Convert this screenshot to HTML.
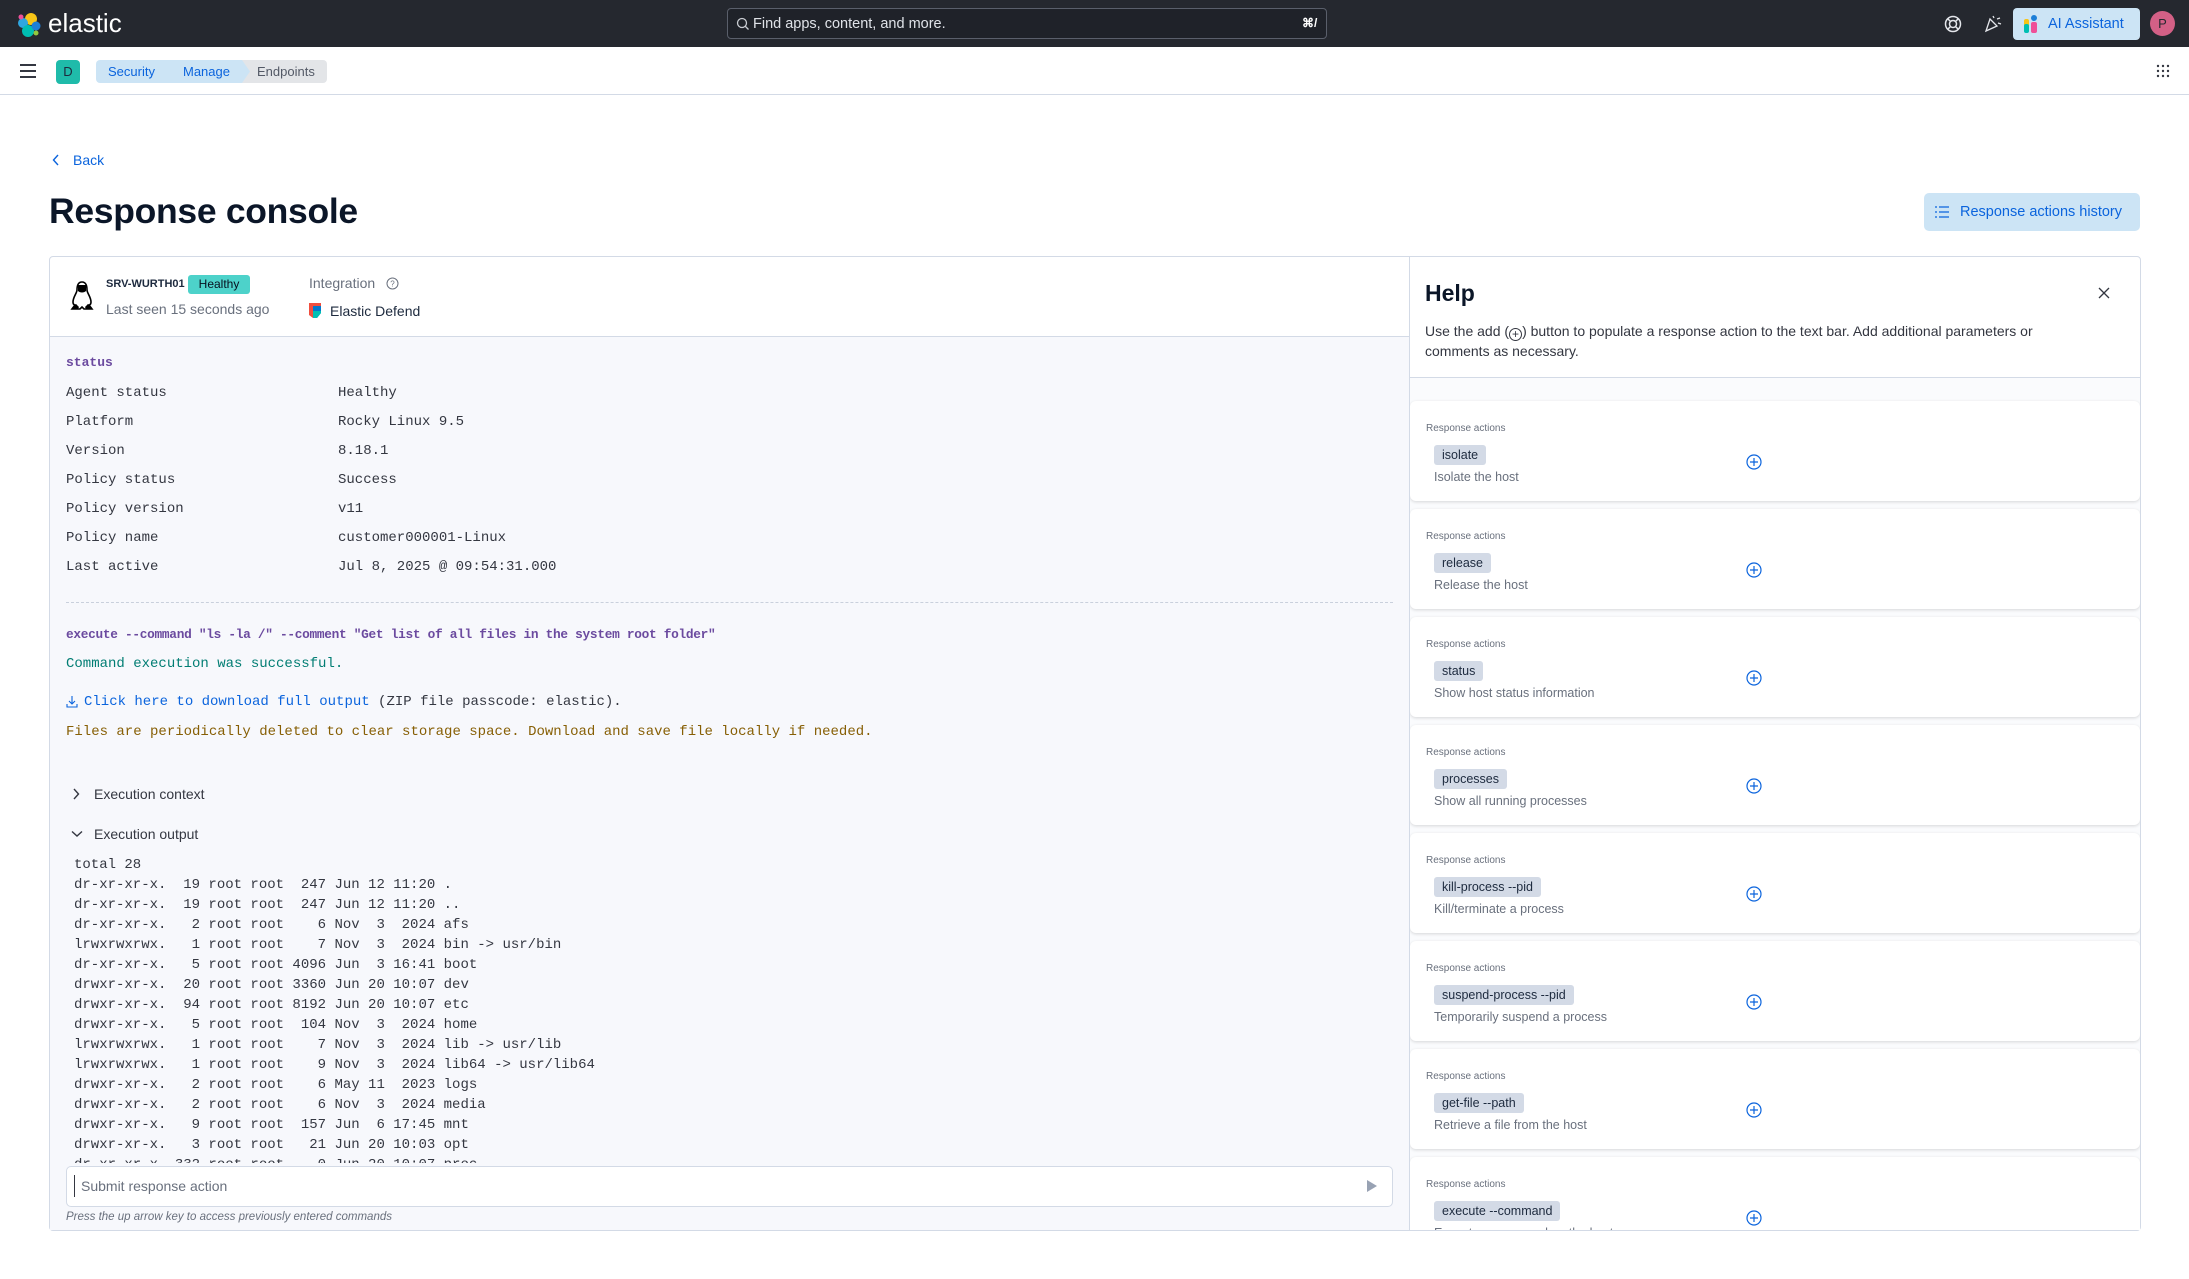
<!DOCTYPE html>
<html><head><meta charset="utf-8"><style>
*{box-sizing:border-box;margin:0;padding:0}
body{width:2189px;height:1279px;overflow:hidden;background:#fff;font-family:"Liberation Sans",sans-serif;color:#1d2a3e;position:relative}
.a{position:absolute;white-space:nowrap}
.mono{font-family:"Liberation Mono",monospace}
.top{position:absolute;left:0;top:0;width:2189px;height:47px;background:#25282f}
.bar2{position:absolute;left:0;top:47px;width:2189px;height:48px;background:#fff;border-bottom:1px solid #d3dae6}
.bc{position:absolute;top:60px;height:23px;font-size:13px;line-height:23px;padding-left:18px}
.item{position:absolute;left:1410px;width:730px;height:100px;background:#fff;border-radius:6px;box-shadow:0 1px 3px rgba(0,0,0,.15)}
.item .l{position:absolute;left:16px;top:22px;font-size:10px;color:#69707d}
.item .b{position:absolute;left:24px;top:44px;height:20px;line-height:20px;padding:0 8px;background:#d3dae6;border-radius:3px;font-size:12.5px;color:#1d2a3e}
.item .d{position:absolute;left:24px;top:69px;font-size:12.5px;color:#69707d}
.item svg{position:absolute;left:336px;top:53px}
.kv{position:absolute;font-size:14px;color:#343741}
.out{position:absolute;left:74px;top:855px;font-size:14px;line-height:20px;color:#343741;white-space:pre;height:308px;overflow:hidden}
</style></head><body>
<div class="top"></div>
<svg class="a" style="left:16px;top:12px" width="26" height="26" viewBox="0 0 26 26"><circle cx="15" cy="7" r="6" fill="#f8c517"/><circle cx="7" cy="11" r="5" fill="#2fa6e0"/><circle cx="12" cy="19" r="6" fill="#00bfb3"/><circle cx="20" cy="14" r="4.5" fill="#1d7fd8"/><circle cx="5" cy="5" r="2.5" fill="#ef5098"/><circle cx="20" cy="21" r="2.5" fill="#93c83e"/></svg>
<div class="a" style="left:48px;top:8px;font-size:26px;color:#fff">elastic</div>
<div class="a" style="left:727px;top:8px;width:600px;height:31px;border:1px solid #5a5f6b;border-radius:4px;background:#1f2229"></div>
<svg class="a" style="left:736px;top:17px" width="14" height="14" viewBox="0 0 14 14"><circle cx="6" cy="6" r="4.5" fill="none" stroke="#c9ccd2" stroke-width="1.3"/><path d="M9 9l3.5 3.5" stroke="#c9ccd2" stroke-width="1.3"/></svg>
<div class="a" style="left:753px;top:16px;font-size:14.5px;color:#dfe2e8">Find apps, content, and more.</div>
<div class="a" style="left:1302px;top:16px;font-size:12px;color:#fff;font-weight:bold">⌘/</div>
<svg class="a" style="left:1943px;top:14px" width="20" height="20" viewBox="0 0 20 20" fill="none" stroke="#e4e6eb" stroke-width="1.5"><circle cx="10" cy="10" r="7.5"/><circle cx="10" cy="10" r="3.5"/><path d="M5 5l2.5 2.5M15 5l-2.5 2.5M5 15l2.5-2.5M15 15l-2.5-2.5"/></svg>
<svg class="a" style="left:1983px;top:13px" width="20" height="20" viewBox="0 0 20 20" fill="none" stroke="#e4e6eb" stroke-width="1.3"><path d="M3 18l4-12 7 7z M10 3l1 2M14 6l3-1M15 10l3 1"/></svg>
<div class="a" style="left:2013px;top:8px;width:127px;height:32px;background:#cce4f5;border-radius:4px"></div>
<svg class="a" style="left:2024px;top:15px" width="14" height="18" viewBox="0 0 14 18"><rect x="0" y="4" width="5" height="8" rx="2" fill="#f8c517"/><rect x="0" y="9" width="5" height="9" rx="2" fill="#00bfb3"/><circle cx="10" cy="3" r="3" fill="#1d7fd8"/><rect x="7" y="7" width="6" height="11" rx="2" fill="#ef5098"/></svg>
<div class="a" style="left:2048px;top:16px;font-size:14.5px;color:#0b64dd">AI Assistant</div>
<div class="a" style="left:2150px;top:11px;width:25px;height:25px;border-radius:50%;background:#d36086;color:#25282f;font-size:13px;line-height:25px;text-align:center">P</div>

<div class="bar2"></div>
<div class="a" style="left:20px;top:64px;width:16px;height:2px;background:#343741;box-shadow:0 6px 0 #343741,0 12px 0 #343741"></div>
<div class="a" style="left:56px;top:60px;width:24px;height:24px;border-radius:4px;background:#1fbbaa;font-size:13px;line-height:24px;text-align:center;color:#1d2a3e">D</div>
<div class="bc" style="left:96px;width:82px;background:#cce4f5;color:#0b64dd;border-radius:4px 0 0 4px;padding-left:12px;clip-path:polygon(0 0,74px 0,82px 50%,74px 100%,0 100%)">Security</div>
<div class="bc" style="left:168px;width:83px;background:#cce4f5;color:#0b64dd;padding-left:15px;clip-path:polygon(0 0,75px 0,83px 50%,75px 100%,0 100%,8px 50%)">Manage</div>
<div class="bc" style="left:242px;width:85px;background:#e3e5e8;color:#535966;border-radius:0 4px 4px 0;padding-left:15px;clip-path:polygon(0 0,100% 0,100% 100%,0 100%,8px 50%)">Endpoints</div>
<svg class="a" style="left:2156px;top:64px" width="14" height="14" viewBox="0 0 14 14" fill="#343741"><circle cx="2" cy="2" r="1.2"/><circle cx="7" cy="2" r="1.2"/><circle cx="12" cy="2" r="1.2"/><circle cx="2" cy="7" r="1.2"/><circle cx="7" cy="7" r="1.2"/><circle cx="12" cy="7" r="1.2"/><circle cx="2" cy="12" r="1.2"/><circle cx="7" cy="12" r="1.2"/><circle cx="12" cy="12" r="1.2"/></svg>

<svg class="a" style="left:52px;top:154px" width="8" height="12" viewBox="0 0 8 12"><path d="M6 1L1.5 6 6 11" fill="none" stroke="#0b64dd" stroke-width="1.4"/></svg>
<div class="a" style="left:73px;top:152px;font-size:14px;color:#0b64dd">Back</div>
<div class="a" style="left:49px;top:191px;font-size:35.5px;font-weight:bold;color:#0b1628;letter-spacing:-0.3px">Response console</div>
<div class="a" style="left:1924px;top:193px;width:216px;height:38px;background:#cce4f5;border-radius:5px"></div>
<svg class="a" style="left:1935px;top:205px" width="14" height="14" viewBox="0 0 14 14" stroke="#0b64dd" stroke-width="1.2"><path d="M0 2h2M4 2h10M0 7h2M4 7h10M0 12h2M4 12h10"/></svg>
<div class="a" style="left:1960px;top:204px;font-size:14.5px;color:#0b64dd">Response actions history</div>

<div class="a" style="left:49px;top:256px;width:2092px;height:975px;border:1px solid #d3dae6;border-radius:4px;background:#fff"></div>
<div class="a" style="left:50px;top:337px;width:1359px;height:893px;background:#f7f8fc"></div>
<div class="a" style="left:50px;top:336px;width:1359px;height:1px;background:#d3dae6"></div>
<div class="a" style="left:1409px;top:257px;width:1px;height:973px;background:#d3dae6"></div>

<svg class="a" style="left:70px;top:281px" width="24" height="30" viewBox="0 0 24 30"><path d="M12 1c-4 0-5 4-5 8 0 3-4 7-4 12 0 3 2 3 2 3l-3 4h8l2-2 2 2h8l-3-4s2 0 2-3c0-5-4-9-4-12 0-4-1-8-5-8z" fill="#fff" stroke="#000" stroke-width="1.6"/><path d="M8 4h8v6c-2 2-6 2-8 0z" fill="#000"/><path d="M2 28l4-5 3 3-1 2zM22 28l-4-5-3 3 1 2z" fill="#000"/></svg>
<div class="a" style="left:106px;top:278px;font-size:11px;font-weight:bold;color:#1d2a3e">SRV-WURTH01</div>
<div class="a" style="left:188px;top:275px;width:62px;height:19px;background:#4dd2ca;border-radius:3px;font-size:12px;line-height:19px;text-align:center;color:#07101f">Healthy</div>
<div class="a" style="left:106px;top:301px;font-size:14px;color:#69707d">Last seen 15 seconds ago</div>
<div class="a" style="left:309px;top:275px;font-size:14px;color:#69707d">Integration</div>
<svg class="a" style="left:386px;top:277px" width="13" height="13" viewBox="0 0 13 13"><circle cx="6.5" cy="6.5" r="5.5" fill="none" stroke="#69707d"/><text x="6.5" y="9.5" font-size="8" text-anchor="middle" fill="#69707d" font-family="Liberation Sans">?</text></svg>
<svg class="a" style="left:309px;top:303px" width="12" height="15" viewBox="0 0 12 15"><path d="M0 0h12v3H4v12L0 12z" fill="#f04e3e"/><path d="M4 3h8v7l-4 5H4z" fill="#07c"/><path d="M4 8h8v2l-4 5H4z" fill="#00bfb3"/></svg>
<div class="a" style="left:330px;top:303px;font-size:14px;color:#1d2a3e">Elastic Defend</div>

<div class="a mono" style="left:66px;top:355px;font-size:13px;color:#6b4a9f;font-weight:bold">status</div>
<div class="kv mono" style="left:66px;top:379px;line-height:29px">Agent status<br>Platform<br>Version<br>Policy status<br>Policy version<br>Policy name<br>Last active</div>
<div class="kv mono" style="left:338px;top:379px;line-height:29px">Healthy<br>Rocky Linux 9.5<br>8.18.1<br>Success<br>v11<br>customer000001-Linux<br>Jul 8, 2025 @ 09:54:31.000</div>
<div class="a" style="left:66px;top:602px;width:1327px;border-top:1px dashed #c9d0dc"></div>
<div class="a mono" style="left:66px;top:627px;font-size:12.8px;color:#6b4a9f;font-weight:bold;letter-spacing:-0.3px">execute --command "ls -la /" --comment "Get list of all files in the system root folder"</div>
<div class="a mono" style="left:66px;top:656px;font-size:14px;color:#017d73">Command execution was successful.</div>
<svg class="a" style="left:66px;top:695px" width="12" height="13" viewBox="0 0 12 13" fill="none" stroke="#0b64dd" stroke-width="1.1"><path d="M6 1v8M3 6l3 3 3-3M1 9v3h10V9"/></svg>
<div class="a mono" style="left:84px;top:694px;font-size:14px;color:#343741"><span style="color:#0b64dd">Click here to download full output</span> (ZIP file passcode: elastic).</div>
<div class="a mono" style="left:66px;top:724px;font-size:14px;color:#875f05">Files are periodically deleted to clear storage space. Download and save file locally if needed.</div>
<svg class="a" style="left:72px;top:788px" width="8" height="12" viewBox="0 0 8 12"><path d="M2 1l4.5 5L2 11" fill="none" stroke="#343741" stroke-width="1.4"/></svg>
<div class="a" style="left:94px;top:786px;font-size:14px;color:#343741">Execution context</div>
<svg class="a" style="left:71px;top:830px" width="12" height="8" viewBox="0 0 12 8"><path d="M1 1.5l5 4.5 5-4.5" fill="none" stroke="#343741" stroke-width="1.4"/></svg>
<div class="a" style="left:94px;top:826px;font-size:14px;color:#343741">Execution output</div>
<div class="out mono">total 28
dr-xr-xr-x.  19 root root  247 Jun 12 11:20 .
dr-xr-xr-x.  19 root root  247 Jun 12 11:20 ..
dr-xr-xr-x.   2 root root    6 Nov  3  2024 afs
lrwxrwxrwx.   1 root root    7 Nov  3  2024 bin -> usr/bin
dr-xr-xr-x.   5 root root 4096 Jun  3 16:41 boot
drwxr-xr-x.  20 root root 3360 Jun 20 10:07 dev
drwxr-xr-x.  94 root root 8192 Jun 20 10:07 etc
drwxr-xr-x.   5 root root  104 Nov  3  2024 home
lrwxrwxrwx.   1 root root    7 Nov  3  2024 lib -> usr/lib
lrwxrwxrwx.   1 root root    9 Nov  3  2024 lib64 -> usr/lib64
drwxr-xr-x.   2 root root    6 May 11  2023 logs
drwxr-xr-x.   2 root root    6 Nov  3  2024 media
drwxr-xr-x.   9 root root  157 Jun  6 17:45 mnt
drwxr-xr-x.   3 root root   21 Jun 20 10:03 opt
dr-xr-xr-x. 332 root root    0 Jun 20 10:07 proc</div>
<div class="a" style="left:66px;top:1166px;width:1327px;height:41px;border:1px solid #d3dae6;border-radius:5px;background:#fff"></div>
<div class="a" style="left:74px;top:1175px;width:1px;height:22px;background:#343741"></div>
<div class="a" style="left:81px;top:1178px;font-size:14px;color:#69707d">Submit response action</div>
<svg class="a" style="left:1366px;top:1179px" width="12" height="14" viewBox="0 0 12 14"><path d="M1 1l10 6-10 6z" fill="#98a2b3"/></svg>
<div class="a" style="left:66px;top:1211px;font-size:11.5px;font-style:italic;color:#69707d">Press the up arrow key to access previously entered commands</div>

<div class="a" style="left:1425px;top:280px;font-size:23px;font-weight:bold;color:#0b1628">Help</div>
<svg class="a" style="left:2098px;top:287px" width="12" height="12" viewBox="0 0 12 12"><path d="M1 1l10 10M11 1L1 11" stroke="#343741" stroke-width="1.3"/></svg>
<div class="a" style="left:1425px;top:321px;font-size:14px;line-height:20px;color:#343741;white-space:normal;width:660px">Use the add (<span style="display:inline-block;width:13px;height:13px;border:1px solid #343741;border-radius:50%;text-align:center;line-height:11px;font-size:12px;vertical-align:-2px">+</span>) button to populate a response action to the text bar. Add additional parameters or comments as necessary.</div>
<div class="a" style="left:1410px;top:377px;width:730px;height:1px;background:#d3dae6"></div>
<div class="a" style="left:1410px;top:378px;width:730px;height:852px;background:#fafbfd;overflow:hidden">
<div class="item" style="left:0;top:23px"><div class="l">Response actions</div><div class="b">isolate</div><div class="d">Isolate the host</div><svg width="16" height="16" viewBox="0 0 16 16"><circle cx="8" cy="8" r="7" fill="none" stroke="#0b64dd" stroke-width="1.2"/><path d="M8 4v8M4 8h8" stroke="#0b64dd" stroke-width="1.2"/></svg></div>
<div class="item" style="left:0;top:131px"><div class="l">Response actions</div><div class="b">release</div><div class="d">Release the host</div><svg width="16" height="16" viewBox="0 0 16 16"><circle cx="8" cy="8" r="7" fill="none" stroke="#0b64dd" stroke-width="1.2"/><path d="M8 4v8M4 8h8" stroke="#0b64dd" stroke-width="1.2"/></svg></div>
<div class="item" style="left:0;top:239px"><div class="l">Response actions</div><div class="b">status</div><div class="d">Show host status information</div><svg width="16" height="16" viewBox="0 0 16 16"><circle cx="8" cy="8" r="7" fill="none" stroke="#0b64dd" stroke-width="1.2"/><path d="M8 4v8M4 8h8" stroke="#0b64dd" stroke-width="1.2"/></svg></div>
<div class="item" style="left:0;top:347px"><div class="l">Response actions</div><div class="b">processes</div><div class="d">Show all running processes</div><svg width="16" height="16" viewBox="0 0 16 16"><circle cx="8" cy="8" r="7" fill="none" stroke="#0b64dd" stroke-width="1.2"/><path d="M8 4v8M4 8h8" stroke="#0b64dd" stroke-width="1.2"/></svg></div>
<div class="item" style="left:0;top:455px"><div class="l">Response actions</div><div class="b">kill-process --pid</div><div class="d">Kill/terminate a process</div><svg width="16" height="16" viewBox="0 0 16 16"><circle cx="8" cy="8" r="7" fill="none" stroke="#0b64dd" stroke-width="1.2"/><path d="M8 4v8M4 8h8" stroke="#0b64dd" stroke-width="1.2"/></svg></div>
<div class="item" style="left:0;top:563px"><div class="l">Response actions</div><div class="b">suspend-process --pid</div><div class="d">Temporarily suspend a process</div><svg width="16" height="16" viewBox="0 0 16 16"><circle cx="8" cy="8" r="7" fill="none" stroke="#0b64dd" stroke-width="1.2"/><path d="M8 4v8M4 8h8" stroke="#0b64dd" stroke-width="1.2"/></svg></div>
<div class="item" style="left:0;top:671px"><div class="l">Response actions</div><div class="b">get-file --path</div><div class="d">Retrieve a file from the host</div><svg width="16" height="16" viewBox="0 0 16 16"><circle cx="8" cy="8" r="7" fill="none" stroke="#0b64dd" stroke-width="1.2"/><path d="M8 4v8M4 8h8" stroke="#0b64dd" stroke-width="1.2"/></svg></div>
<div class="item" style="left:0;top:779px"><div class="l">Response actions</div><div class="b">execute --command</div><div class="d">Execute a command on the host</div><svg width="16" height="16" viewBox="0 0 16 16"><circle cx="8" cy="8" r="7" fill="none" stroke="#0b64dd" stroke-width="1.2"/><path d="M8 4v8M4 8h8" stroke="#0b64dd" stroke-width="1.2"/></svg></div>
</div>
</body></html>
